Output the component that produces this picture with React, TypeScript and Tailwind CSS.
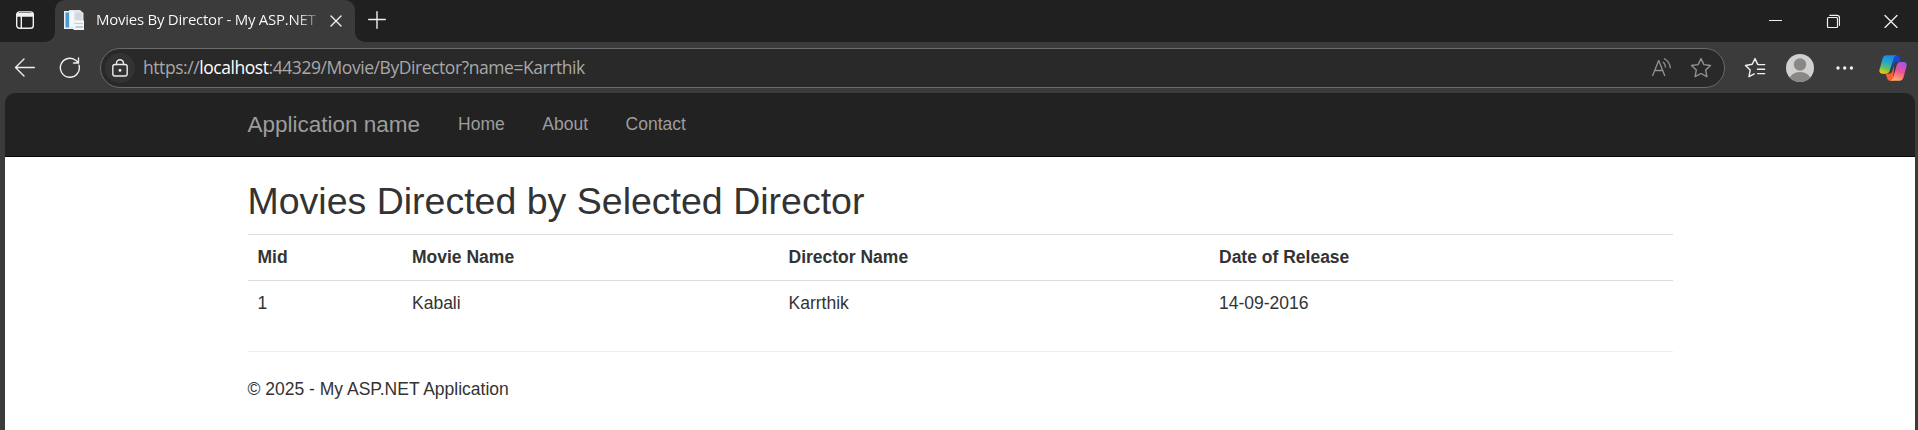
import type { ReactNode } from "react";

const movies = [{ id: 1, name: "Kabali", director: "Karrthik", released: "14-09-2016" }];

function Icon({ size, className = "", children }: { size: number; className?: string; children: ReactNode }) {
  return (
    <svg
      width={size}
      height={size}
      viewBox={`0 0 ${size} ${size}`}
      fill="none"
      stroke="currentColor"
      strokeWidth="1.4"
      strokeLinecap="round"
      strokeLinejoin="round"
      className={`block shrink-0 ${className}`}
    >
      {children}
    </svg>
  );
}

function Favicon() {
  return (
    <svg width="22" height="22" viewBox="0 0 22 22" className="mt-[9px] block shrink-0">
      <path d="M0 2h10v18H0z" fill="#e8eef3" />
      <path d="M1.500 3.500h4v15h-4z" fill="#4a9bd4" />
      <path d="M5 1h11l3.500 3v15H5z" fill="#dfe5ea" />
      <path d="M6 2h4v16H6z" fill="#f4f7f9" />
      <path d="M11.500 4h6v7h-6z" fill="#cfd8df" />
      <path d="M9.500 11.500H20V21H9.500z" fill="#f2f4f6" />
      <path d="M10.500 14h8.500v1h-8.500zM11.500 17h7.500v2h-7.500z" fill="#c3ccd3" />
    </svg>
  );
}

function Copilot() {
  return (
    <svg width="28" height="26" viewBox="0 0 28 26" className="block shrink-0">
      <defs>
        <linearGradient id="cool" x1="0.6" y1="0" x2="0.3" y2="1">
          <stop offset="0" stopColor="#1689e8" />
          <stop offset="0.4" stopColor="#2aa5c8" />
          <stop offset="0.7" stopColor="#5fbf62" />
          <stop offset="1" stopColor="#f4c90e" />
        </linearGradient>
        <linearGradient id="warm" x1="0.7" y1="0" x2="0.4" y2="1">
          <stop offset="0" stopColor="#a353ee" />
          <stop offset="0.5" stopColor="#ef5293" />
          <stop offset="1" stopColor="#ffae62" />
        </linearGradient>
      </defs>
      <path d="M14 .3h3.7c1.400 0 2.300.8 2.700 2.200L21.800 7h-3.300c-2 0-3.100.8-3.700 2.600L13 15Z" fill="#1749cf" />
      <path d="M14 25.700h-2.600c-1.600 0-2.700-.8-3.200-2.300L6.600 18.800h3.100c1.900 0 2.900-.8 3.500-2.500L15 11Z" fill="#fa6038" />
      <path d="M7.500.3h10c-1.800.4-2.400 1.600-3 3.400L10.800 15.600c-.8 2.300-2.100 3.200-4.200 3.200H3.500C.8 18.800-.1 16.900.6 14.300L3.500 4C4.200 1.600 5.300.3 7.500.3Z" fill="url(#cool)" />
      <path d="M20.500 25.700h-9.400c1.800-.4 2.500-1.600 3.100-3.400l3.500-12c.7-2.300 2-3.300 4.100-3.300h2.700c2.700 0 3.700 1.900 3 4.500L24.600 22c-.7 2.400-1.900 3.700-4.100 3.700Z" fill="url(#warm)" />
    </svg>
  );
}

function TitleBar() {
  return (
    <div className="flex h-[42px] bg-[#202020] text-[#f0f0f0]">
      <div className="w-[55px] bg-[#3b3b3b]">
        <div className="flex h-full items-start rounded-br-[10px] bg-[#202020] pt-[11px] pl-4">
          <Icon size={18}>
            <rect x="0.7" y="0.9" width="16.600" height="16.400" rx="2.800" />
            <path d="M1.500 3.100h15M1.500 4.800h15" strokeWidth="2" />
            <path d="M5.300 5v12" />
          </Icon>
        </div>
      </div>
      <div className="flex w-[300px] items-start rounded-t-[10px] bg-[#3b3b3b] pl-[9px]">
        <Favicon />
        <div className="mt-[8px] ml-[10px] w-[222px] bg-linear-to-r from-white from-90% to-white/20 bg-clip-text font-['Open_Sans',sans-serif] text-[15px] leading-[22px] tracking-[-0.250px] whitespace-nowrap text-transparent">
          Movies By Director - My ASP.NET
        </div>
        <Icon size={12} className="mt-[15px] ml-[12px]">
          <path d="M1 1l10 10M11 1L1 11" />
        </Icon>
      </div>
      <div className="flex-1 bg-[#3b3b3b]">
        <div className="flex h-full items-start justify-between rounded-bl-[10px] bg-[#202020] pl-[13px]">
          <Icon size={18} className="mt-[11px]">
            <path d="M9 .7v16.600M.7 8.500h16.600" />
          </Icon>
          <div className="flex pr-[20px]">
            <Icon size={14} className="mt-[14px] mr-[44px]">
              <path d="M1 6.500h13" strokeLinecap="butt" strokeWidth="1" />
            </Icon>
            <Icon size={14} className="mt-[14px] mr-[44px]">
              <rect x="1.500" y="3.500" width="10" height="10" rx="1" strokeWidth="1.200" />
              <path d="M3.800 1.300h7.200c1.600 0 2.500.900 2.500 2.500v7.500" strokeWidth="1.200" />
            </Icon>
            <Icon size={14} className="mt-[14px]">
              <path d="M1 1.500l12 12M13 1.500l-12 12" strokeWidth="1.300" />
            </Icon>
          </div>
        </div>
      </div>
    </div>
  );
}

function Toolbar() {
  return (
    <div className="flex h-[51px] items-center bg-[#3b3b3b] text-[#f0f0f0]">
      <Icon size={22} className="ml-[14px]">
        <path d="M20.300 10.500H1.700M10 2L1.500 10.500L10 19" />
      </Icon>
      <Icon size={22} className="ml-[23px]">
        <path d="M20 8.200A9.500 9.500 0 1 1 17.300 3.800L19.500 6M19.500 1v5h-5" />
      </Icon>
      <div className="ml-[19px] flex h-[40px] w-[1625px] items-center rounded-full border border-[#6a6a6a] bg-[#292929] pl-[4px]">
        <div className="flex size-[30px] items-center justify-center rounded-full bg-[#333333]">
          <Icon size={18} className="text-[#ececec]">
            <rect x="1.800" y="5.500" width="14.400" height="11.500" rx="2.200" />
            <path d="M5.500 5.500V4.200a3.500 3.500 0 0 1 7 0v1.300" />
            <circle cx="9" cy="11.300" r="0.800" fill="currentColor" />
          </Icon>
        </div>
        <div className="ml-[8px] flex-1 pb-[2px] font-['Open_Sans',sans-serif] text-[17.500px] leading-6 tracking-[-0.440px] text-[#a8a8a8]">
          https://<span className="text-white">localhost</span>:44329/Movie/ByDirector?name=Karrthik
        </div>
        <Icon size={20} className="text-[#929292]">
          <path d="M1.700 17.500L7.700 2.500l6 15M4 12.500h7.500M12.300 4.300c1.400 1.200 2.100 2.700 2.100 4.700M13.500 .800c3.300 2 5.500 5 5.800 9" strokeWidth="1.300" />
        </Icon>
        <Icon size={22} className="mr-[12px] ml-[19px] text-[#929292]">
          <path d="M11 1.600l2.900 6 6.600.900-4.800 4.600 1.200 6.600-5.900-3.200-5.900 3.200 1.200-6.600L1.500 8.500l6.600-.900z" />
        </Icon>
      </div>
      <Icon size={22} className="ml-[19px]">
        <path d="M14.200 7.500L13.700 7.400 11 1.600 8.200 7.300 1.500 8.500l4.700 4.600L5 19.700l5.200-2.800M14.200 7.600h6.500M13.500 12.300h7.200M13.500 16.600h7.200" />
      </Icon>
      <svg width="28" height="28" viewBox="0 0 28 28" className="ml-[20px] block shrink-0">
        <defs>
          <clipPath id="avatar">
            <circle cx="14" cy="14" r="14" />
          </clipPath>
        </defs>
        <g clipPath="url(#avatar)">
          <path d="M0 0h28v28H0z" fill="#d2d0ce" />
          <circle cx="14" cy="10.500" r="6.200" fill="#8a8886" />
          <ellipse cx="14" cy="25.500" rx="10.500" ry="7.500" fill="#8a8886" />
        </g>
      </svg>
      <svg width="18" height="4" viewBox="0 0 18 4" fill="#f0f0f0" className="ml-[22px] block shrink-0">
        <circle cx="2" cy="2" r="1.700" />
        <circle cx="8.700" cy="2" r="1.700" />
        <circle cx="15.400" cy="2" r="1.700" />
      </svg>
      <div className="ml-[25px]">
        <Copilot />
      </div>
    </div>
  );
}

export default function App() {
  return (
    <div className="flex h-[430px] w-[1918px] flex-col overflow-hidden bg-[#3b3b3b]">
      <TitleBar />
      <Toolbar />
      <main className="mr-[3px] ml-[5px] flex flex-1 flex-col font-['Liberation_Sans',Arial,sans-serif] text-[17.500px] leading-[25px] text-[#333333]">
        <nav className="h-[64px] shrink-0 rounded-t-[10px] bg-[#222222] text-[#9d9d9d] shadow-[inset_0_-1px_0_#080808]">
          <div className="mx-auto flex w-[1425px] items-center pt-[19px]">
            <span className="mr-[38px] text-[22.500px]">Application name</span>
            <span className="mr-[37.500px]">Home</span>
            <span className="mr-[37.500px]">About</span>
            <span>Contact</span>
          </div>
        </nav>
        <div className="flex-1 bg-white">
          <div className="mx-auto w-[1425px] pt-[24px]">
            <h2 className="text-[37.500px] leading-[41px] font-normal">Movies Directed by Selected Director</h2>
            <table className="mt-[12px] w-full table-fixed border-separate border-spacing-0 text-left">
              <colgroup>
                <col className="w-[154.500px]" />
                <col className="w-[376.500px]" />
                <col className="w-[430.500px]" />
                <col />
              </colgroup>
              <tbody>
                <tr>
                  {["Mid", "Movie Name", "Director Name", "Date of Release"].map((title) => (
                    <th key={title} className="border-t border-[#dddddd] p-[10px] align-top font-bold">{title}</th>
                  ))}
                </tr>
                {movies.map((m) => (
                  <tr key={m.id}>
                    {[m.id, m.name, m.director, m.released].map((value) => (
                      <td key={value} className="border-t border-[#dddddd] p-[10px] align-top">{value}</td>
                    ))}
                  </tr>
                ))}
              </tbody>
            </table>
            <hr className="my-[25px] border-[#eeeeee]" />
            <p>© 2025 - My ASP.NET Application</p>
          </div>
        </div>
      </main>
    </div>
  );
}
